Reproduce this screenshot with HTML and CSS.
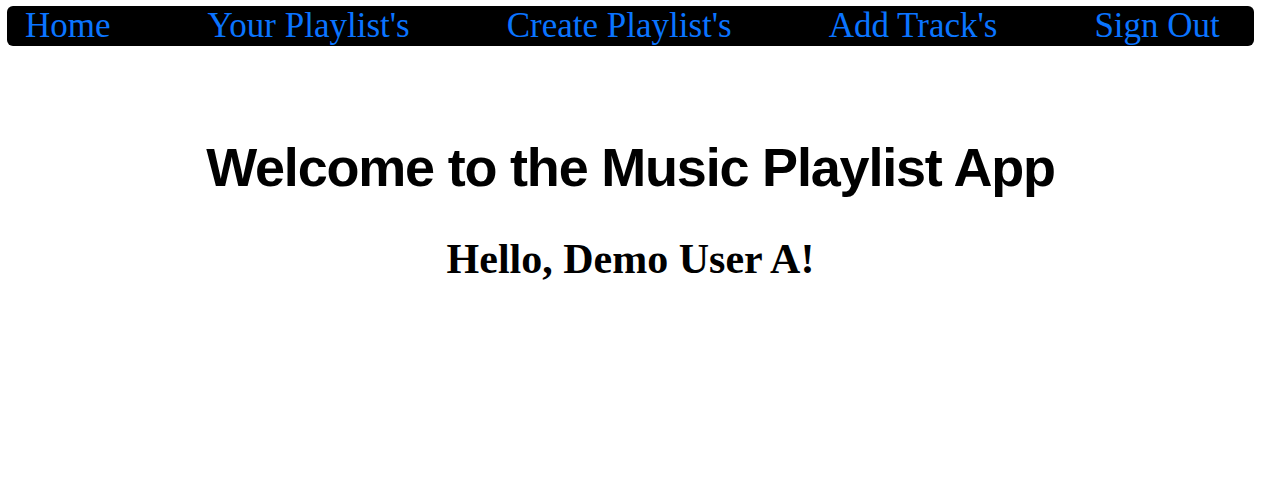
FILE: index.html
```html
<!DOCTYPE html>
<html>
<head>
<meta charset="utf-8">
<link rel="stylesheet" href="styles.css">
</head>
<body>
<nav class="navbar">
  <a class="nav-link" href="#">Home</a>
  <a class="nav-link" href="#">Your Playlist's</a>
  <a class="nav-link" href="#">Create Playlist's</a>
  <a class="nav-link" href="#">Add Track's</a>
  <a class="nav-link" href="#">Sign Out</a>
</nav>
<main class="content">
  <h1 class="title">Welcome to the Music Playlist App</h1>
  <h2 class="greeting">Hello, Demo User A!</h2>
</main>
</body>
</html>
```
FILE: styles.css
```css
body {
  margin: 6px 10px 0 7px;
  font-family: "Liberation Serif", serif;
  background: #fff;
}
.navbar {
  background: #000;
  border-radius: 6px;
  height: 40px;
  display: flex;
  align-items: center;
  gap: 97px;
  padding-left: 18px;
}
.nav-link {
  color: #0a74ff;
  text-decoration: none;
  font-size: 35px;
  line-height: 40px;
}
.content {
  text-align: center;
}
.title {
  font-family: "Liberation Sans", sans-serif;
  font-size: 54px;
  letter-spacing: -1.2px;
  font-weight: bold;
  margin: 90px 0 0;
}
.greeting {
  font-size: 42px;
  font-weight: bold;
  margin: 37px 0 0;
}
```
